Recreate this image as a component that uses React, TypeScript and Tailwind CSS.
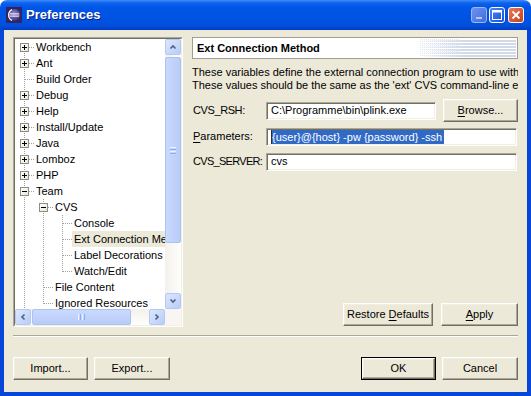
import React from "react";

/* ───────── Types / data ───────── */

type Cell = "line" | "none" | "tee" | "ell" | "first";

type TreeRow = {
  label: string;
  cells: Cell[];
  box?: "plus" | "minus";
  selected?: boolean;
};

const treeRows: TreeRow[] = [
  { label: "Workbench", cells: ["first"], box: "plus" },
  { label: "Ant", cells: ["tee"], box: "plus" },
  { label: "Build Order", cells: ["tee"] },
  { label: "Debug", cells: ["tee"], box: "plus" },
  { label: "Help", cells: ["tee"], box: "plus" },
  { label: "Install/Update", cells: ["tee"], box: "plus" },
  { label: "Java", cells: ["tee"], box: "plus" },
  { label: "Lomboz", cells: ["tee"], box: "plus" },
  { label: "PHP", cells: ["tee"], box: "plus" },
  { label: "Team", cells: ["tee"], box: "minus" },
  { label: "CVS", cells: ["line", "tee"], box: "minus" },
  { label: "Console", cells: ["line", "line", "tee"] },
  { label: "Ext Connection Method", cells: ["line", "line", "tee"], selected: true },
  { label: "Label Decorations", cells: ["line", "line", "tee"] },
  { label: "Watch/Edit", cells: ["line", "line", "ell"] },
  { label: "File Content", cells: ["line", "tee"] },
  { label: "Ignored Resources", cells: ["line", "ell"] },
];

const raised =
  "border border-t-white border-l-white border-r-[#716F64] border-b-[#716F64] shadow-[inset_-1px_-1px_0_#ACA899,inset_1px_1px_0_#F1EFE2] bg-[#ECE9D8]";

const sunken =
  "border border-t-[#ACA899] border-l-[#ACA899] border-r-white border-b-white shadow-[inset_1px_1px_0_#716F64,inset_-1px_-1px_0_#F1EFE2] bg-white";

/* ───────── Title bar ───────── */

function EclipseIcon() {
  return (
    <svg width="16" height="16" viewBox="0 0 16 16">
      <defs>
        <radialGradient id="ecl" cx="0.45" cy="0.4" r="0.7">
          <stop offset="0" stopColor="#9A8ED6" />
          <stop offset="1" stopColor="#2A1F5E" />
        </radialGradient>
      </defs>
      <rect x="0" y="0" width="16" height="16" fill="#2F2566" />
      <circle cx="8.5" cy="8" r="6" fill="url(#ecl)" />
      <path d="M6 2.6 A6 6 0 0 0 6 13.4" stroke="#fff" strokeWidth="1.2" fill="none" />
      <path d="M4 6.6h9M3.6 8h9.6M4 9.4h9" stroke="#E8E6F8" strokeWidth="0.8" />
    </svg>
  );
}

function TitleBar() {
  return (
    <div className="h-[30px] shrink-0 rounded-t-[7px] bg-[linear-gradient(to_bottom,#3D8DF8_0px,#0D62EE_3px,#0056E6_7px,#0054E3_55%,#0050DC_85%,#003CC4_100%)] flex items-center pl-[6px] pr-[7px]">
      <EclipseIcon />
      <span className="ml-[4px] text-white font-bold text-[13px] [text-shadow:1px_1px_0_#0B1F85]">
        Preferences
      </span>
      <div className="ml-auto flex items-center">
        <div className="w-[16px] h-[16px] rounded-[3px] border border-[#9DB6F0] bg-[linear-gradient(135deg,#6C93EC,#3F6DE0)] flex items-end justify-center pb-[3px]">
          <div className="w-[6px] h-[2px] bg-[#B5C7F1]" />
        </div>
        <div className="ml-[2px] w-[16px] h-[16px] rounded-[3px] border border-white bg-[linear-gradient(135deg,#4A86F6,#1550E0)] flex items-center justify-center">
          <svg width="10" height="10" viewBox="0 0 10 10">
            <rect x="0.5" y="0.5" width="9" height="9" stroke="#fff" fill="none" />
            <rect x="0" y="0" width="10" height="2.5" fill="#fff" />
          </svg>
        </div>
        <div className="ml-[3px] w-[16px] h-[16px] rounded-[3px] border border-white bg-[linear-gradient(135deg,#E9795A,#C8401C)] flex items-center justify-center">
          <svg width="10" height="10" viewBox="0 0 10 10">
            <path d="M1.5 1.5L8.5 8.5M8.5 1.5L1.5 8.5" stroke="#fff" strokeWidth="1.8" />
          </svg>
        </div>
      </div>
    </div>
  );
}

/* ───────── Scrollbars ───────── */

function Chevron({ dir }: { dir: "up" | "down" | "left" | "right" }) {
  const d = {
    up: "M1.5 5.5L4 3L6.5 5.5",
    down: "M1.5 2.5L4 5L6.5 2.5",
    left: "M5.5 1.5L3 4L5.5 6.5",
    right: "M2.5 1.5L5 4L2.5 6.5",
  }[dir];
  return (
    <div className="w-[16px] h-[16px] shrink-0 rounded-[2px] border border-[#B4C8F6] bg-[linear-gradient(135deg,#DCE6FE,#BACDF8)] flex items-center justify-center">
      <svg width="8" height="8" viewBox="0 0 8 8">
        <path d={d} stroke="#4D6185" strokeWidth="1.6" fill="none" />
      </svg>
    </div>
  );
}

function VScroll() {
  return (
    <div className="flex flex-col bg-[linear-gradient(to_right,#F3F1EC,#FEFEFB)]">
      <Chevron dir="up" />
      <div className="mt-[2px] h-[186px] rounded-[2px] border border-[#ABC2F3] bg-[linear-gradient(to_right,#CAD9FD,#B8CCF9)] flex flex-col items-center justify-center gap-px">
        <div className="w-[6px] h-px bg-[#EEF4FE]" />
        <div className="w-[6px] h-px bg-[#8CB0F8]" />
        <div className="w-[6px] h-px bg-[#EEF4FE]" />
        <div className="w-[6px] h-px bg-[#8CB0F8]" />
      </div>
      <div className="flex-1" />
      <Chevron dir="down" />
    </div>
  );
}

function HScroll() {
  return (
    <div className="flex bg-[linear-gradient(to_bottom,#F3F1EC,#FEFEFB)]">
      <Chevron dir="left" />
      <div className="ml-px w-[99px] rounded-[2px] border border-[#ABC2F3] bg-[linear-gradient(to_bottom,#CAD9FD,#B8CCF9)] flex items-center justify-center gap-px">
        <div className="h-[6px] w-px bg-[#EEF4FE]" />
        <div className="h-[6px] w-px bg-[#8CB0F8]" />
        <div className="h-[6px] w-px bg-[#EEF4FE]" />
        <div className="h-[6px] w-px bg-[#8CB0F8]" />
      </div>
      <div className="flex-1" />
      <Chevron dir="right" />
    </div>
  );
}

/* ───────── Tree ───────── */

const vDots = "bg-[repeating-linear-gradient(to_bottom,#A0A0A0_0_1px,transparent_1px_2px)]";
const hDots = "bg-[repeating-linear-gradient(to_right,#A0A0A0_0_1px,transparent_1px_2px)]";

function GutterCell({ kind, box }: { kind: Cell; box?: "plus" | "minus" }) {
  return (
    <div className="relative w-[19px] h-[16px] shrink-0">
      {(kind === "line" || kind === "tee") && (
        <div className={`absolute left-[9px] top-0 w-px h-[16px] ${vDots}`} />
      )}
      {kind === "first" && (
        <div className={`absolute left-[9px] top-[8px] w-px h-[8px] ${vDots}`} />
      )}
      {kind === "ell" && (
        <div className={`absolute left-[9px] top-0 w-px h-[9px] ${vDots}`} />
      )}
      {kind !== "line" && kind !== "none" && (
        <div className={`absolute left-[10px] top-[8px] h-px w-[9px] ${hDots}`} />
      )}
      {box && (
        <div className="absolute left-[5px] top-[4px] w-[9px] h-[9px] border border-[#8E8D82] bg-[linear-gradient(135deg,#FFFFFF,#E6E4DA)]">
          <div className="absolute left-[1px] top-[3px] w-[5px] h-px bg-black" />
          {box === "plus" && <div className="absolute left-[3px] top-[1px] w-px h-[5px] bg-black" />}
        </div>
      )}
    </div>
  );
}

function Tree() {
  return (
    <div className="w-[170px] h-[290px] shrink-0 border border-t-[#ACA899] border-l-[#ACA899] border-r-white border-b-white">
      <div className="w-full h-full border border-t-[#716F64] border-l-[#716F64] border-r-[#F1EFE2] border-b-[#F1EFE2] bg-white grid grid-cols-[150px_16px] grid-rows-[270px_16px]">
        <div className="overflow-hidden">
          {treeRows.map((r) => (
            <div key={r.label} className="flex h-[16px]">
              {r.cells.map((c, i) => (
                <GutterCell key={i} kind={c} box={i === r.cells.length - 1 ? r.box : undefined} />
              ))}
              <span
                className={`h-[16px] leading-[16px] pl-[2px] pr-[2px] whitespace-nowrap ${
                  r.selected ? "bg-[#ECE9D8]" : ""
                }`}
              >
                {r.label}
              </span>
            </div>
          ))}
        </div>
        <VScroll />
        <HScroll />
        <div className="bg-[#F7F6F2]" />
      </div>
    </div>
  );
}

/* ───────── Buttons ───────── */

function Btn({
  children,
  w,
  isDefault,
}: {
  children: React.ReactNode;
  w: string;
  isDefault?: boolean;
}) {
  const label = <span className="whitespace-pre">{children}</span>;
  if (isDefault) {
    return (
      <div className={`${w} h-[23px] border border-black`}>
        <div className={`w-full h-full ${raised} flex items-center justify-center`}>{label}</div>
      </div>
    );
  }
  return <div className={`${w} h-[23px] ${raised} flex items-center justify-center`}>{label}</div>;
}

const U = ({ c }: { c: string }) => <span className="underline underline-offset-[2px]">{c}</span>;

/* ───────── Right panel ───────── */

function BannerArt() {
  return (
    <svg width="96" height="18" viewBox="0 0 96 18" className="absolute right-[1px] top-[1px]">
      <defs>
        <linearGradient id="fade" x1="0" x2="1" y1="0" y2="0">
          <stop offset="0" stopColor="#fff" stopOpacity="0" />
          <stop offset="0.45" stopColor="#fff" stopOpacity="1" />
        </linearGradient>
        <mask id="m">
          <rect width="96" height="18" fill="url(#fade)" />
        </mask>
        <pattern id="dith" width="2" height="2" patternUnits="userSpaceOnUse">
          <rect width="1" height="1" fill="#C9D3E6" />
        </pattern>
      </defs>
      <g mask="url(#m)">
        {[1, 4, 7, 10, 13, 16].map((y) => (
          <rect key={y} x="0" y={y} width="96" height="2" fill="#D2DAEA" />
        ))}
      </g>
      <rect x="0" y="0" width="40" height="18" fill="url(#dith)" opacity="0.5" />
    </svg>
  );
}

function RightPanel() {
  return (
    <div className="flex-1 min-w-0 flex flex-col overflow-hidden">
      <div className="relative h-[22px] shrink-0 border border-[#A09E94] bg-white flex items-center pl-[4px] font-bold">
        Ext Connection Method
        <BannerArt />
      </div>

      <div className="mt-[7px] leading-[13px] whitespace-nowrap">
        <div>These variables define the external connection program to use with the 'ext' connection method.</div>
        <div>These values should be the same as the 'ext' CVS command-line environment variable settings.</div>
      </div>

      <div className="mt-[7px] h-[23px] flex items-center">
        <span className="w-[74px] shrink-0 pl-px tracking-[-0.4px] whitespace-nowrap">CVS_RSH:</span>
        <div className={`w-[170px] h-[18px] ${sunken} flex items-center pl-[4px] whitespace-nowrap`}>
          C:\Programme\bin\plink.exe
        </div>
        <div className="ml-[7px]">
          <Btn w="w-[75px]">
            <U c="B" />
            rowse...
          </Btn>
        </div>
      </div>

      <div className="mt-[3px] h-[23px] flex items-center">
        <span className="w-[74px] shrink-0 pl-px">
          <U c="P" />
          arameters:
        </span>
        <div className={`flex-1 mr-px h-[18px] ${sunken} flex items-center pl-[4px] whitespace-nowrap`}>
          <span className="w-px h-[14px] bg-[#2B2B2B]" />
          <span className="bg-[#316AC5] text-white leading-[14px] pr-[2px]">
            {"{user}@{host} -pw {password} -ssh"}
          </span>
        </div>
      </div>

      <div className="mt-[2px] h-[23px] flex items-center">
        <span className="w-[74px] shrink-0 pl-px tracking-[-0.7px] whitespace-nowrap">CVS_SERVER:</span>
        <div className={`flex-1 mr-px h-[18px] ${sunken} flex items-center pl-[4px]`}>cvs</div>
      </div>

      <div className="mt-auto mb-px flex justify-end gap-[8px]">
        <Btn w="w-[90px]">
          {"Restore "}
          <U c="D" />
          efaults
        </Btn>
        <Btn w="w-[77px]">
          <U c="A" />
          pply
        </Btn>
      </div>
    </div>
  );
}

/* ───────── App ───────── */

export default function App() {
  return (
    <div className="w-[531px] h-[396px] flex flex-col bg-white font-['Liberation_Sans',Arial,sans-serif] text-[11px] text-black select-none">
      <TitleBar />
      <div className="flex-1 flex flex-col border-x-4 border-b-4 border-[#0846D9] bg-[#ECE9D8] px-[9px] pt-[7px]">
        <div className="flex h-[290px] gap-[9px]">
          <Tree />
          <RightPanel />
        </div>

        <div className="mt-[8px] h-[2px] border-t border-t-[#ACA899] border-b border-b-white" />

        <div className="mt-[20px] flex">
          <Btn w="w-[75px]">Import...</Btn>
          <div className="ml-[6px]">
            <Btn w="w-[76px]">Export...</Btn>
          </div>
          <div className="ml-auto flex gap-[6px]">
            <Btn w="w-[75px]" isDefault>
              OK
            </Btn>
            <Btn w="w-[76px]">Cancel</Btn>
          </div>
        </div>
      </div>
    </div>
  );
}
